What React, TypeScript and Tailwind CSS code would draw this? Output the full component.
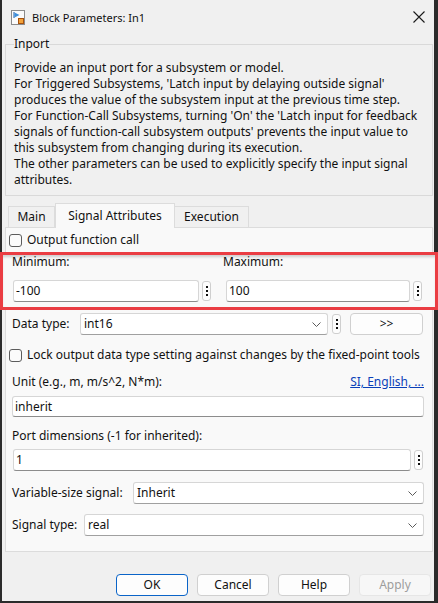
import React from 'react'

function AppIcon() {
  return (
    <svg width="14" height="15" viewBox="0 0 14 15">
      <rect x="0.5" y="0.5" width="13" height="14" fill="#fbfbfb" stroke="#8c8c8c" />
      <path d="M3 2 V8" stroke="#1d5aa6" strokeWidth="1" />
      <path d="M3.5 2.5 L8.5 5 L3.5 7.5 Z" fill="#3c8fdc" />
      <rect x="7.5" y="8.5" width="5" height="5" fill="#f2a23a" stroke="#a8520e" />
    </svg>
  )
}

function CloseIcon() {
  return (
    <svg width="12" height="12" viewBox="0 0 12 12">
      <path d="M0.5 0.5 L11.5 11.5 M11.5 0.5 L0.5 11.5" stroke="#1a1a1a" strokeWidth="1.1" />
    </svg>
  )
}

function Chevron() {
  return (
    <svg width="9" height="5" viewBox="0 0 9 5" className="shrink-0">
      <path d="M0.5 0.5 L4.5 4.5 L8.5 0.5" fill="none" stroke="#5a5a5a" strokeWidth="1" />
    </svg>
  )
}

function Dots() {
  return (
    <div className="w-[9px] h-[20px] shrink-0 rounded-[3px] border border-[#cfcfcf] bg-[#fdfdfd] flex flex-col items-center justify-center gap-[2px]">
      <span className="w-[2px] h-[2px] bg-[#111]" />
      <span className="w-[2px] h-[2px] bg-[#111]" />
      <span className="w-[2px] h-[2px] bg-[#111]" />
    </div>
  )
}

function Checkbox() {
  return <span className="w-[13px] h-[13px] shrink-0 rounded-[3px] border border-[#5c5c5c] bg-[#fbfbfb]" />
}

function TextField({ value, className = '' }: { value: string; className?: string }) {
  return (
    <div
      className={`h-[21px] flex items-center px-[2px] rounded-[3px] border border-[#d6d6d6] border-b-[#8c8c8c] bg-white ${className}`}
    >
      {value}
    </div>
  )
}

function Select({ value, className = '' }: { value: string; className?: string }) {
  return (
    <div
      className={`h-[22px] flex items-center justify-between pl-[3px] pr-[6px] rounded-[3px] border border-[#d6d6d6] border-b-[#a0a0a0] bg-white ${className}`}
    >
      <span>{value}</span>
      <Chevron />
    </div>
  )
}

export default function App() {
  return (
    <div className="w-[438px] h-[603px] bg-[#f0f0f0] border-l-2 border-r-4 border-b-2 border-[#2b2b2b] flex flex-col text-[12px] leading-[16px] text-[#111] font-['Noto_Sans',sans-serif]">
      {/* Title bar */}
      <div className="h-[34px] flex items-center pl-[9px] pr-[9px] shrink-0">
        <AppIcon />
        <span className="ml-[7px] mt-[2px] flex-1 text-[11px]">Block Parameters: In1</span>
        <CloseIcon />
      </div>

      {/* Description group */}
      <fieldset className="mt-[2px] ml-[3px] mr-[1px] border border-[#d9d9d9] pl-[8px] pr-[4px] pt-[8px] pb-[7px] shrink-0">
        <legend className="px-0 leading-[16px]">Inport</legend>
        <p className="whitespace-nowrap">
          Provide an input port for a subsystem or model.
          <br />
          For Triggered Subsystems, 'Latch input by delaying outside signal'
          <br />
          produces the value of the subsystem input at the previous time step.
          <br />
          For Function-Call Subsystems, turning 'On' the 'Latch input for feedback
          <br />
          signals of function-call subsystem outputs' prevents the input value to
          <br />
          this subsystem from changing during its execution.
          <br />
          The other parameters can be used to explicitly specify the input signal
          <br />
          attributes.
        </p>
      </fieldset>

      {/* Tabs */}
      <div className="mt-[7px] ml-[3px] mr-[1px] h-[24px] flex items-end pl-[3px] shrink-0">
        <div className="w-[47px] h-[21px] border border-b-0 border-[#dcdcdc] flex items-center justify-center">
          Main
        </div>
        <div className="relative z-10 w-[120px] h-[25px] -mb-px border border-b-0 border-[#dcdcdc] bg-[#f9f9f9] flex items-center justify-center pb-[1px]">
          Signal Attributes
        </div>
        <div className="w-[74px] h-[21px] border border-b-0 border-l-0 border-[#dcdcdc] flex items-center justify-center">
          Execution
        </div>
      </div>

      {/* Tab panel */}
      <div className="ml-[3px] mr-[1px] h-[325px] border border-[#dcdcdc] bg-[#f9f9f9] flex flex-col shrink-0">
        <div className="h-[24px] flex items-center pl-[3px] gap-[5px]">
          <Checkbox />
          <span>Output function call</span>
        </div>

        {/* Highlighted min / max */}
        <div className="relative z-20 -mx-[6px] h-[58px] border-[3px] border-[#ea3d43] shadow-[inset_0_3px_3px_-1px_rgba(0,0,0,0.18)] bg-[#f9f9f9] flex gap-[11px] pl-[9px]">
          <div className="w-[200px] flex flex-col">
            <div className="h-[14px] leading-[14px]">Minimum:</div>
            <div className="mt-[11px] flex items-center gap-[3px] pl-[1px]">
              <TextField value="-100" className="w-[186px] h-[22px]" />
              <Dots />
            </div>
          </div>
          <div className="w-[200px] flex flex-col">
            <div className="h-[14px] leading-[14px]">Maximum:</div>
            <div className="mt-[11px] flex items-center gap-[3px] pl-[3px]">
              <TextField value="100" className="w-[184px] h-[22px]" />
              <Dots />
            </div>
          </div>
        </div>

        <div className="mt-[3px] flex items-center pl-[6px]">
          <span className="w-[68px]">Data type:</span>
          <Select value="int16" className="w-[248px]" />
          <div className="ml-[4px]">
            <Dots />
          </div>
          <div className="ml-[9px] w-[73px] h-[22px] rounded-[4px] border border-[#d0d0d0] bg-[#fdfdfd] flex items-center justify-center">
            &gt;&gt;
          </div>
        </div>

        <div className="mt-[10px] h-[20px] flex items-center pl-[3px] gap-[5px]">
          <Checkbox />
          <span className="whitespace-nowrap">Lock output data type setting against changes by the fixed-point tools</span>
        </div>

        <div className="mt-[9px] h-[16px] flex items-center justify-between pl-[6px] pr-[8px]">
          <span>Unit (e.g., m, m/s^2, N*m):</span>
          <span className="text-[#0b3fb8] underline">SI, English, ...</span>
        </div>

        <div className="mt-[6px] pl-[6px] pr-[8px]">
          <TextField value="inherit" className="w-full" />
        </div>

        <div className="mt-[11px] h-[16px] flex items-center pl-[6px]">Port dimensions (-1 for inherited):</div>

        <div className="mt-[5px] flex items-center gap-[3px] pl-[7px] pr-[9px]">
          <TextField value="1" className="flex-1 h-[22px]" />
          <Dots />
        </div>

        <div className="mt-[11px] flex items-center pl-[6px] pr-[8px]">
          <span className="w-[121px]">Variable-size signal:</span>
          <Select value="Inherit" className="flex-1" />
        </div>

        <div className="mt-[10px] flex items-center pl-[6px] pr-[8px]">
          <span className="w-[72px]">Signal type:</span>
          <Select value="real" className="flex-1" />
        </div>
      </div>

      {/* Buttons */}
      <div className="mt-[22px] flex justify-end gap-[9px] pr-[3px] shrink-0">
        <button className="w-[72px] h-[22px] rounded-[4px] border border-[#0a64c8] bg-[#fdfdfd]">OK</button>
        <button className="w-[72px] h-[22px] rounded-[4px] border border-[#d0d0d0] bg-[#fdfdfd]">Cancel</button>
        <button className="w-[72px] h-[22px] rounded-[4px] border border-[#d0d0d0] bg-[#fdfdfd]">Help</button>
        <button className="w-[72px] h-[22px] rounded-[4px] border border-[#e6e6e6] bg-[#f7f7f7] text-[#9d9d9d]">Apply</button>
      </div>
    </div>
  )
}
